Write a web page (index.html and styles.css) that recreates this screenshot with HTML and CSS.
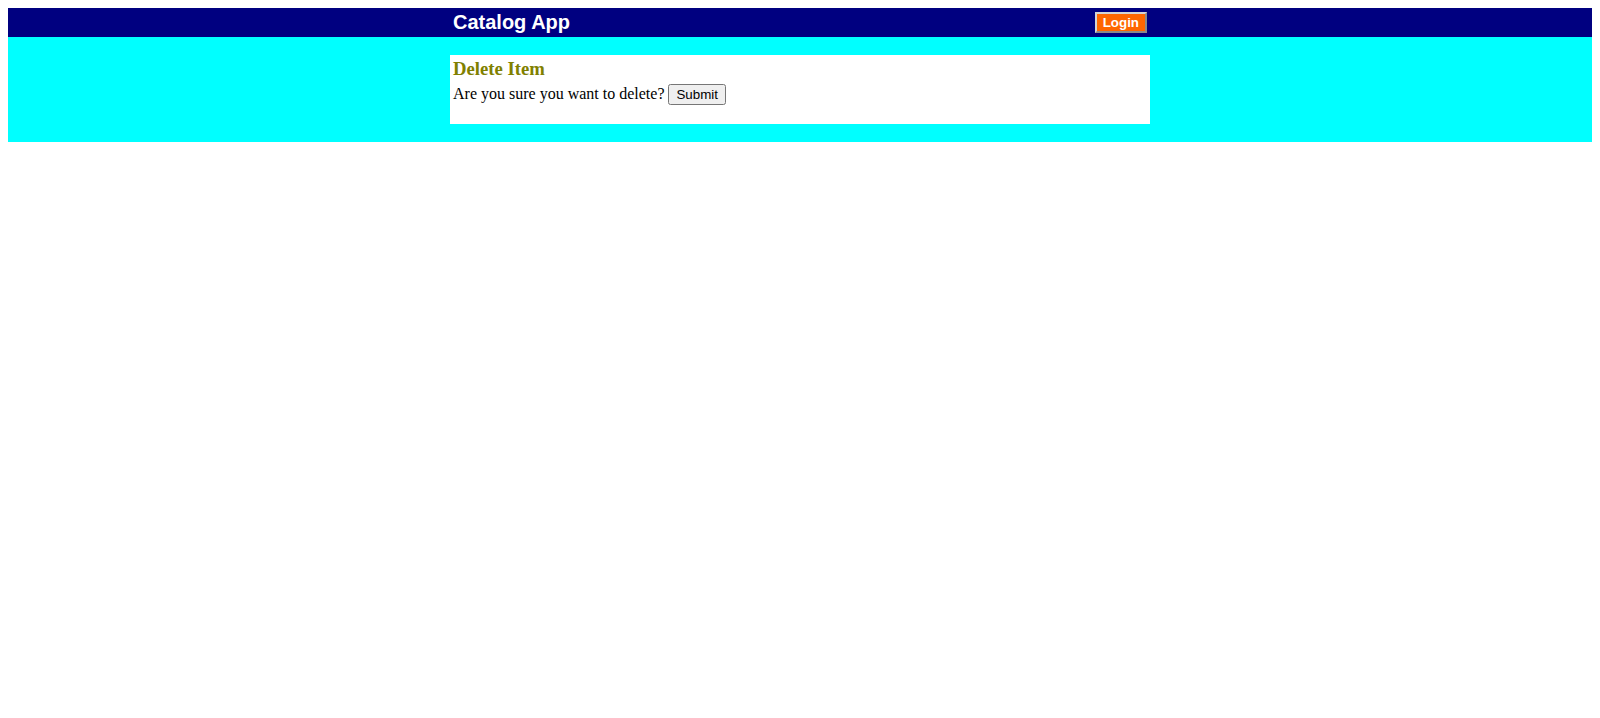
FILE: index.html
```html
<!DOCTYPE html>
<html lang="en">
<head>
  <meta charset="UTF-8">
  <title>Catalog App</title>
  <link rel="stylesheet" href="styles.css">
</head>
<body>
<!-- Top bar -->
<div class="topbar">
    <div class="topbar-inner">
        <a class="brand" href="#">Catalog App</a>
        <button class="login-button">Login</button>
    </div>
</div>

<!-- Main -->
<div class="main">
    <div class="panel">
        <h3>Delete Item</h3>
        <form class="delete-form" onsubmit="return false;">
            Are you sure you want to delete?
            <input class="submit-button" type="submit" value="Submit">
        </form>
    </div>
</div>
</body>
</html>
```

FILE: styles.css
```css
body {
  margin: 8px;
  font-family: "Liberation Serif", "Times New Roman", serif;
  font-size: 16px;
  color: #000;
}

.topbar {
  background: #000080;
  height: 29px;
}

.topbar-inner {
  width: 700px;
  height: 29px;
  margin: 0 auto;
  padding: 0 3px;
  box-sizing: border-box;
  display: flex;
  align-items: center;
  justify-content: space-between;
}

.brand {
  font-family: "Liberation Sans", Arial, sans-serif;
  font-size: 20px;
  font-weight: bold;
  color: #fff;
  text-decoration: none;
}

.login-button {
  font-family: "Liberation Sans", Arial, sans-serif;
  font-size: 13.33px;
  font-weight: bold;
  color: #fff;
  background: #ff6600;
  padding: 1px 6px;
  border: 2px solid;
  border-color: #d4d4d4 #8a8a8a #8a8a8a #d4d4d4;
  line-height: normal;
}

.main {
  background: #00ffff;
  padding: 18px 0;
}

.panel {
  width: 700px;
  margin: 0 auto;
  background: #fff;
  padding: 3px 3px 1px;
  box-sizing: border-box;
}

.panel h3 {
  margin: 0 0 4px;
  font-size: 18.72px;
  color: #808000;
}

.delete-form {
  margin: 0 0 18px;
}

.submit-button {
  font-family: "Liberation Sans", Arial, sans-serif;
  font-size: 13.33px;
}
```
